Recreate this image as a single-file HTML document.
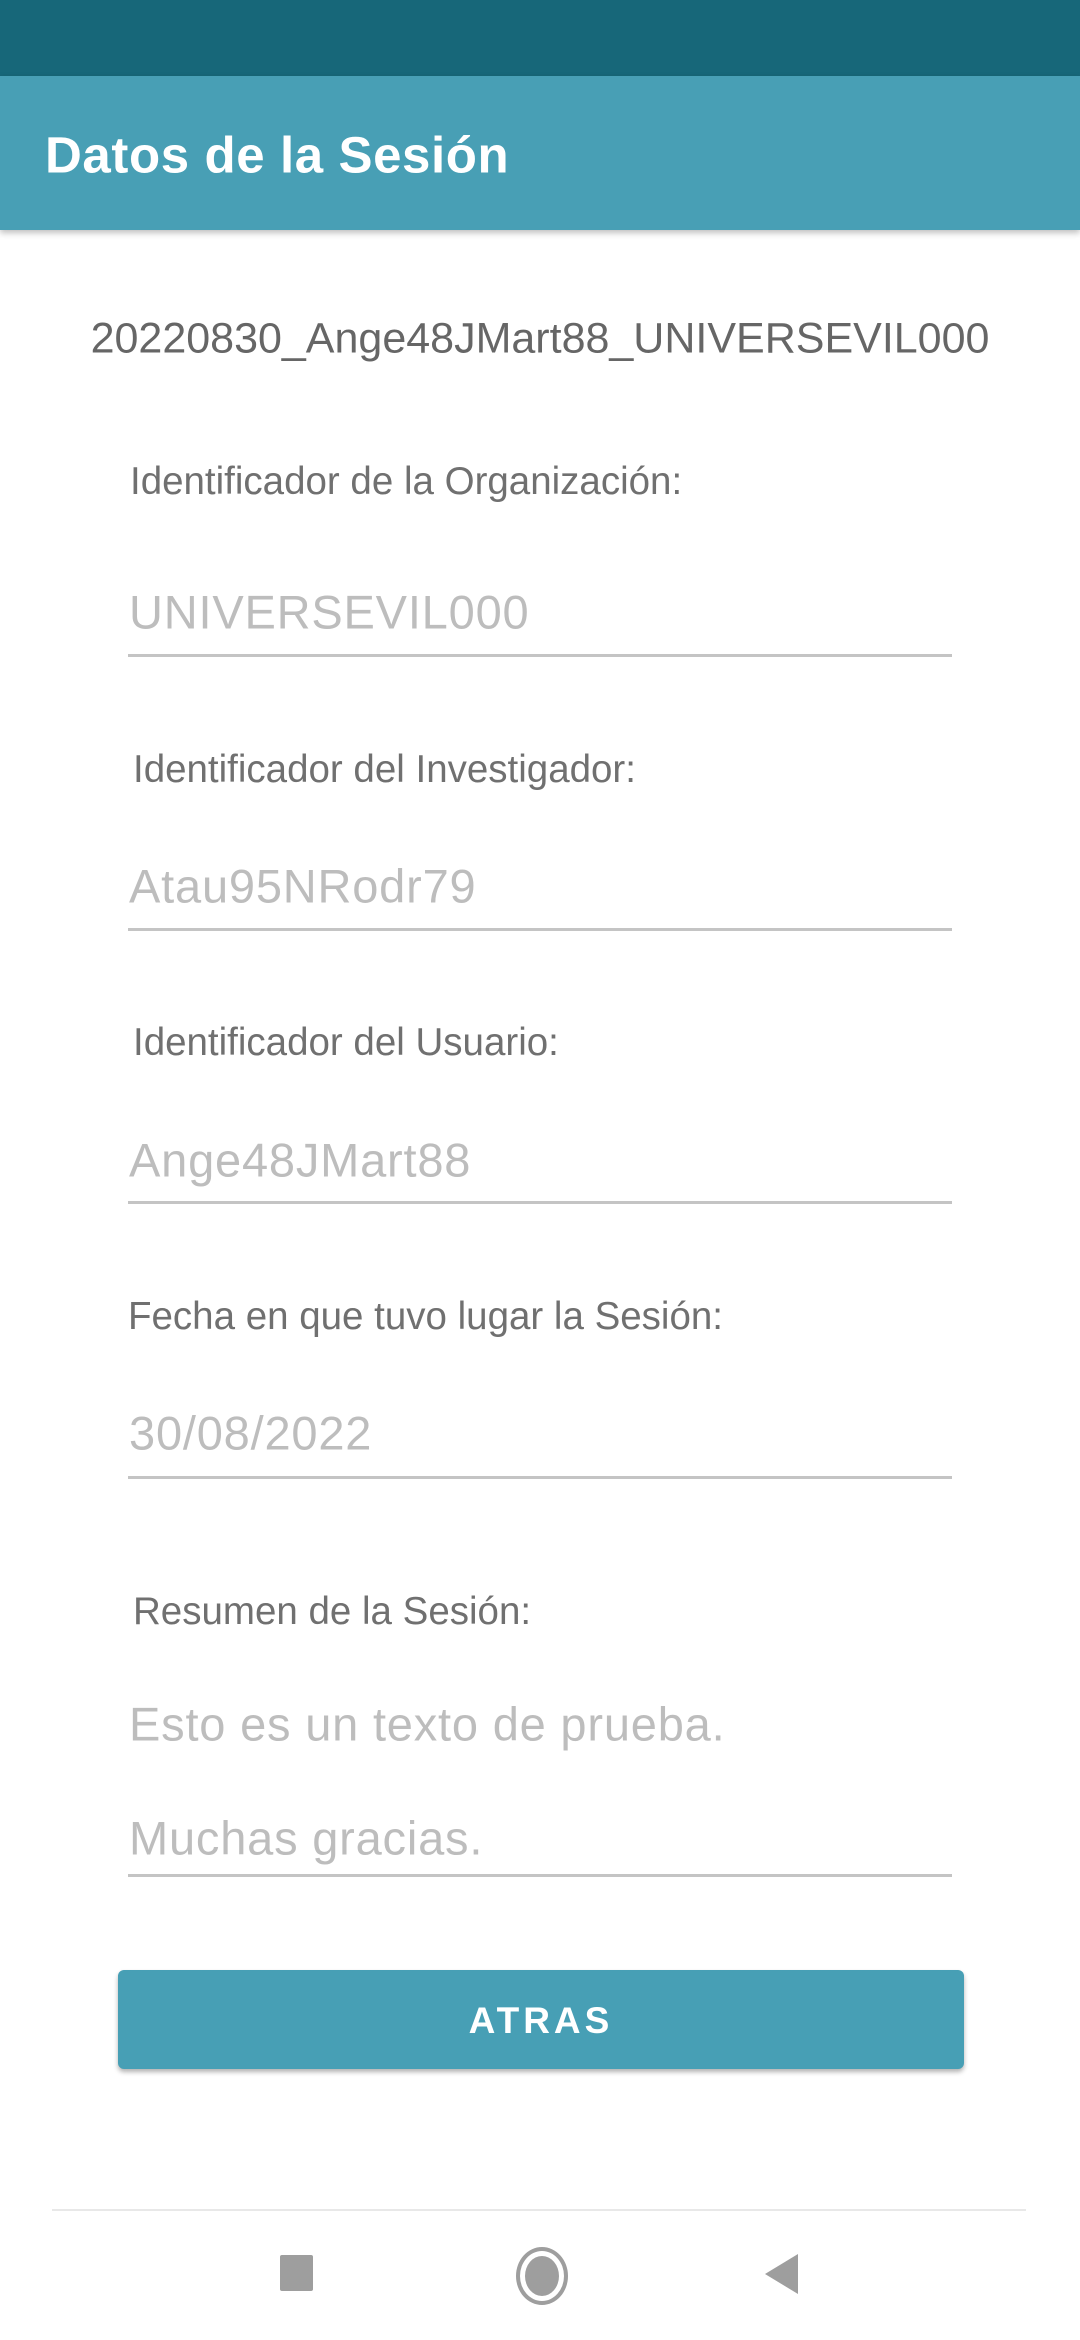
<!DOCTYPE html><html><head><meta charset="utf-8"><style>
body{margin:0;width:1080px;height:2340px;background:#fff;position:relative;overflow:hidden;font-family:"Liberation Sans",sans-serif}
.a{position:absolute}
.lab{position:absolute;font-size:38.5px;color:#707070;line-height:1;transform:translateY(-50%)}
.val{position:absolute;left:129px;font-size:47px;letter-spacing:0.8px;color:#bdbdbd;line-height:1;transform:translateY(-50%)}
.ln{position:absolute;left:128px;width:824px;height:3px;background:#c4c4c4}
</style></head><body>
<div class="a" style="left:0;top:0;width:1080px;height:76px;background:#176779"></div>
<div class="a" style="left:0;top:76px;width:1080px;height:154px;background:#489fb5;box-shadow:0 3px 6px rgba(0,0,0,.25)"></div>
<div class="a" style="left:45px;top:155px;transform:translateY(-50%);font-size:51px;letter-spacing:0.6px;color:#fff;font-weight:bold;line-height:1">Datos de la Sesión</div>
<div class="a" style="left:0;width:1080px;text-align:center;top:339px;transform:translateY(-50%);font-size:43px;color:#666;line-height:1">20220830_Ange48JMart88_UNIVERSEVIL000</div>
<div class="lab" style="left:130px;top:482px">Identificador de la Organización:</div>
<div class="val" style="top:612px">UNIVERSEVIL000</div><div class="ln" style="top:654px"></div>
<div class="lab" style="left:133px;top:770px">Identificador del Investigador:</div>
<div class="val" style="top:886px">Atau95NRodr79</div><div class="ln" style="top:928px"></div>
<div class="lab" style="left:133px;top:1043px">Identificador del Usuario:</div>
<div class="val" style="top:1160px">Ange48JMart88</div><div class="ln" style="top:1201px"></div>
<div class="lab" style="left:128px;top:1317px">Fecha en que tuvo lugar la Sesión:</div>
<div class="val" style="top:1433px">30/08/2022</div><div class="ln" style="top:1476px"></div>
<div class="lab" style="left:133px;top:1612px">Resumen de la Sesión:</div>
<div class="val" style="top:1724px">Esto es un texto de prueba.</div>
<div class="val" style="top:1838px">Muchas gracias.</div><div class="ln" style="top:1874px"></div>
<div class="a" style="left:118px;top:1970px;width:846px;height:99px;background:#479fb5;border-radius:6px;box-shadow:0 3px 5px rgba(0,0,0,.3);color:#fff;font-size:37px;font-weight:bold;letter-spacing:4px;text-align:center;line-height:102px">ATRAS</div>
<div class="a" style="left:52px;top:2209px;width:974px;height:2px;background:#e8e8e8"></div>
<div class="a" style="left:280px;top:2255px;width:33px;height:36px;background:#9e9e9e;border-radius:2px"></div>
<div class="a" style="left:516px;top:2247px;width:44px;height:50px;border:4px solid #9e9e9e;border-radius:50%"></div>
<div class="a" style="left:525px;top:2256px;width:34px;height:40px;background:#9e9e9e;border-radius:50%"></div>
<svg class="a" style="left:762px;top:2252px" width="40" height="46"><path d="M36 2 L36 42 L3 22 Z" fill="#9e9e9e"/></svg>
</body></html>
